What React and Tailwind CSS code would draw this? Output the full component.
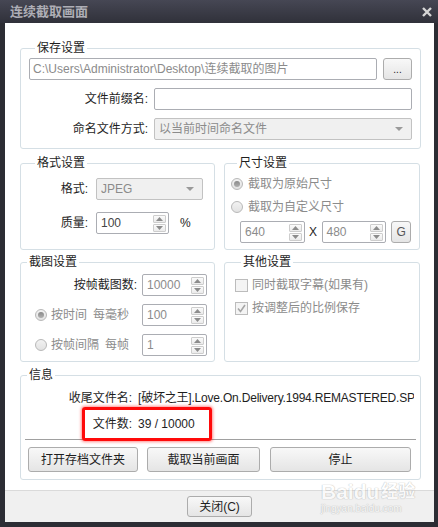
import React from "react";

const FONT = "font-['Liberation_Sans','Noto_Sans_CJK_SC',sans-serif]";

function GroupBox({ title, className = "", children }) {
  return (
    <fieldset className={`min-w-0 border border-[#d5dfe5] rounded-[3px] ${className}`}>
      <legend className="ml-[6px] px-[2px] leading-[16px] text-[#1e1e1e]">{title}</legend>
      {children}
    </fieldset>
  );
}

function Arrow({ up }) {
  return (
    <svg width="7" height="4" viewBox="0 0 7 4">
      <path d={up ? "M0 4 L3.5 0 L7 4 Z" : "M0 0 L3.5 4 L7 0 Z"} fill="#8c8c8c" />
    </svg>
  );
}

function SpinBtn({ up }) {
  return (
    <div className="w-[13px] h-[8px] border border-[#cdcdcd] rounded-[1px] bg-gradient-to-b from-[#fbfbfb] to-[#ebebeb] flex items-center justify-center">
      <Arrow up={up} />
    </div>
  );
}

function Spin({ value, w, disabled }) {
  return (
    <div className={`flex items-center h-[22px] ${w} border border-[#abadb3] rounded-[2px] bg-white pl-[4px] pr-[2px]`}>
      <span className={`flex-1 leading-[20px] ${disabled ? "text-[#8b8b8b]" : "text-[#444]"}`}>{value}</span>
      <div className="flex flex-col gap-[1px]">
        <SpinBtn up />
        <SpinBtn />
      </div>
    </div>
  );
}

function Select({ value, w }) {
  return (
    <div className={`flex items-center h-[22px] ${w} border border-[#c2c2c2] rounded-[2px] bg-[#f0f0f0] pl-[4px] pr-[8px]`}>
      <span className="flex-1 leading-[20px] text-[#8b8b8b] truncate">{value}</span>
      <svg width="8" height="4" viewBox="0 0 8 4">
        <path d="M0 0 L4 4 L8 0 Z" fill="#9a9a9a" />
      </svg>
    </div>
  );
}

function Radio({ checked }) {
  return (
    <div className="w-[12px] h-[12px] rounded-full border border-[#b8b8b8] bg-gradient-to-b from-[#f2f2f2] to-[#e2e2e2] flex items-center justify-center">
      {checked && <div className="w-[6px] h-[6px] rounded-full bg-gradient-to-b from-[#8a8a8a] to-[#b0b0b0]" />}
    </div>
  );
}

function Check({ checked }) {
  return (
    <div className="w-[13px] h-[13px] border border-[#bcbcbc] bg-[#f4f4f4] flex items-center justify-center">
      {checked && (
        <svg width="9" height="9" viewBox="0 0 9 9">
          <path d="M1 4.5 L3.5 7.5 L8 1" stroke="#a6a6a6" strokeWidth="1.6" fill="none" />
        </svg>
      )}
    </div>
  );
}

function Button({ children, className = "" }) {
  return (
    <div className={`flex items-center justify-center border border-[#acacac] rounded-[3px] bg-gradient-to-b from-[#f8f8f8] to-[#e5e5e5] text-[#1e1e1e] ${className}`}>
      {children}
    </div>
  );
}

export default function App() {
  return (
    <div className={`relative w-[438px] h-[527px] bg-[#2c2d34] flex flex-col text-[12px] ${FONT}`}>
      {/* title bar */}
      <div className="h-[23px] flex items-center justify-between pl-[10px] pr-[6px] bg-gradient-to-b from-[#464754] to-[#30313a]">
        <span className="text-[13px] font-bold text-[#aeaeb6] leading-[23px]">连续截取画面</span>
        <svg width="10" height="10" viewBox="0 0 10 10">
          <path d="M1 1 L9 9 M9 1 L1 9" stroke="#d6d6d6" strokeWidth="2.4" />
        </svg>
      </div>

      <div className="flex-1 flex flex-col pl-[5px] pr-[4px] pb-[5px]">
        <div className="flex-1 bg-white pl-[15px] pr-[13px] flex flex-col">
          {/* 保存设置 */}
          <GroupBox title="保存设置" className="mt-[17px] pt-[2px] pb-[8px] px-[8px]">
            <div className="flex flex-col gap-[8px]">
              <div className="flex gap-[6px]">
                <div className="flex-1 h-[22px] border border-[#abadb3] rounded-[2px] pl-[3px] leading-[20px] text-[#8b8b8b] truncate">
                  C:\Users\Administrator\Desktop\连续截取的图片
                </div>
                <Button className="w-[29px] h-[22px] text-[10px]">...</Button>
              </div>
              <div className="flex items-center gap-[6px]">
                <span className="w-[119px] text-right text-[#1e1e1e]">文件前缀名:</span>
                <div className="flex-1 h-[22px] border border-[#abadb3] rounded-[2px] bg-white" />
              </div>
              <div className="flex items-center gap-[6px]">
                <span className="w-[119px] text-right text-[#1e1e1e]">命名文件方式:</span>
                <Select value="以当前时间命名文件" w="flex-1" />
              </div>
            </div>
          </GroupBox>

          <div className="mt-[6px] grid grid-cols-[195px_196px] gap-x-[9px] gap-y-[4px]">
            {/* 格式设置 */}
            <GroupBox title="格式设置" className="pt-[7px] pb-[15px] pl-[8px]">
              <div className="flex items-center">
                <span className="w-[59px] text-right text-[#1e1e1e]">格式:</span>
                <div className="ml-[8px]">
                  <Select value="JPEG" w="w-[107px]" />
                </div>
              </div>
              <div className="flex items-center mt-[12px]">
                <span className="w-[59px] text-right text-[#1e1e1e]">质量:</span>
                <div className="ml-[8px]">
                  <Spin value="100" w="w-[73px]" />
                </div>
                <span className="ml-[11px] text-[#1e1e1e]">%</span>
              </div>
            </GroupBox>

            {/* 尺寸设置 */}
            <GroupBox title="尺寸设置" className="pt-[3px] pb-[6px] pl-[6px] pr-[8px]">
              <div className="flex items-center gap-[5px] h-[20px] text-[#8b8b8b]">
                <Radio checked />
                <span>截取为原始尺寸</span>
              </div>
              <div className="flex items-center gap-[5px] h-[20px] mt-[3px] text-[#8b8b8b]">
                <Radio />
                <span>截取为自定义尺寸</span>
              </div>
              <div className="flex items-center mt-[4px] pl-[9px]">
                <Spin value="640" w="w-[65px]" disabled />
                <span className="w-[17px] text-center text-[#1e1e1e]">X</span>
                <Spin value="480" w="w-[65px]" disabled />
                <Button className="ml-[5px] w-[20px] h-[22px] text-[#555]">G</Button>
              </div>
            </GroupBox>

            {/* 截图设置 */}
            <GroupBox title="截图设置" className="pt-[4px] pb-[5px] pr-[7px]">
              <div className="flex items-center">
                <span className="flex-1 text-right pr-[5px] text-[#1e1e1e]">按帧截图数:</span>
                <Spin value="10000" w="w-[65px]" disabled />
              </div>
              <div className="flex items-center mt-[8px]">
                <div className="flex-1 flex items-center pl-[14px] gap-[4px] text-[#8b8b8b]">
                  <Radio checked />
                  <span>按时间</span>
                  <span className="ml-[2px]">每毫秒</span>
                </div>
                <Spin value="100" w="w-[65px]" disabled />
              </div>
              <div className="flex items-center mt-[8px]">
                <div className="flex-1 flex items-center pl-[14px] gap-[4px] text-[#8b8b8b]">
                  <Radio />
                  <span>按帧间隔</span>
                  <span className="ml-[2px]">每帧</span>
                </div>
                <Spin value="1" w="w-[65px]" disabled />
              </div>
            </GroupBox>

            {/* 其他设置 */}
            <GroupBox title="其他设置" className="pt-[5px] pl-[10px]">
              <div className="flex items-center gap-[4px] h-[20px] text-[#8b8b8b]">
                <Check />
                <span>同时截取字幕(如果有)</span>
              </div>
              <div className="flex items-center gap-[4px] h-[20px] mt-[3px] text-[#8b8b8b]">
                <Check checked />
                <span>按调整后的比例保存</span>
              </div>
            </GroupBox>
          </div>

          {/* 信息 */}
          <GroupBox title="信息" className="mt-[5px] pt-[5px] pb-[7px]">
            <div className="flex items-center h-[20px] text-[#1e1e1e]">
              <span className="w-[111px] shrink-0 text-right">收尾文件名:</span>
              <span className="ml-[6px] whitespace-nowrap overflow-hidden mr-[6px] tracking-[-0.2px]">
                [破坏之王].Love.On.Delivery.1994.REMASTERED.SPE
              </span>
            </div>
            <div className="relative z-10 mt-[-1px] ml-[61px] w-[130px] h-[34px] border-[3px] border-[#ff0a0a] rounded-[3px] shadow-[0_0_3px_1px_rgba(255,0,0,0.45)] flex items-center text-[#1e1e1e]">
              <span className="w-[47px] text-right">文件数:</span>
              <span className="ml-[6px]">39 / 10000</span>
            </div>
            <div className="mt-[-2px] mx-[4px] h-[1px] bg-[#a0a0a0]" />
            <div className="mt-[7px] flex pl-[7px]">
              <Button className="w-[110px] h-[25px]">打开存档文件夹</Button>
              <Button className="ml-[9px] w-[113px] h-[25px]">截取当前画面</Button>
              <Button className="ml-[10px] w-[141px] h-[25px]">停止</Button>
            </div>
          </GroupBox>
        </div>

        <div className="h-[32px] bg-[#f0f0f0] border-t border-[#dadada] flex items-center justify-center">
          <Button className="w-[65px] h-[21px]">关闭(C)</Button>
        </div>
      </div>

      {/* baidu watermark */}
      <div className="absolute left-[321px] top-[481px] flex flex-col items-start opacity-60 pointer-events-none">
        <div className="flex items-end text-[21px] font-bold text-white leading-[22px] [text-shadow:0_0_1px_#9a9a9a,0_0_1px_#9a9a9a]">
          <span>Bai</span>
          <span>du</span>
          <span className="ml-[2px] text-[17px]">经验</span>
        </div>
        <span className="text-[10px] text-white leading-[12px] [text-shadow:0_0_1px_#9a9a9a,0_0_1px_#9a9a9a]">jingyan.baidu.com</span>
      </div>
    </div>
  );
}
